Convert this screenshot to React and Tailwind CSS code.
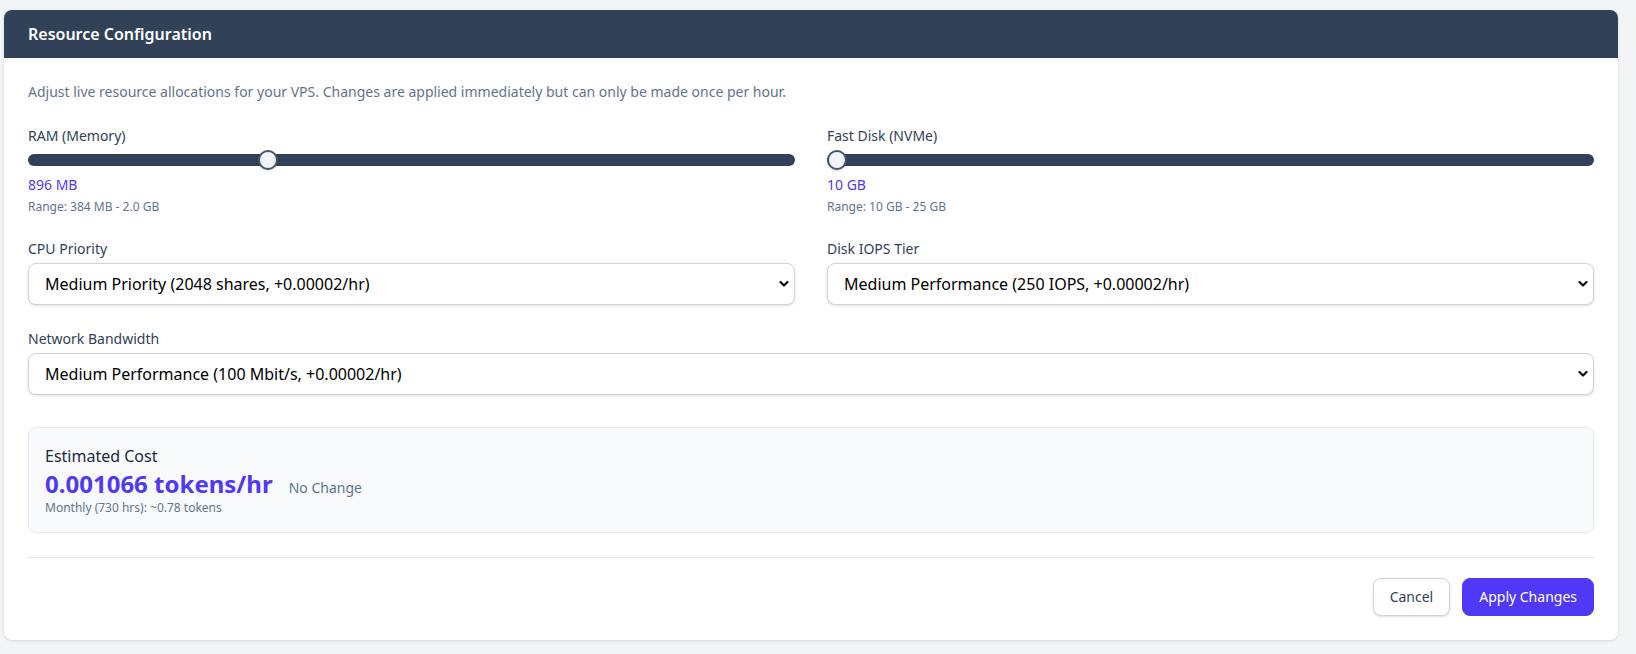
import { useState } from 'react';

const Chevron = () => (
  <svg className="pointer-events-none absolute right-[6px] top-1/2 -translate-y-1/2 w-[10px] h-[7px]" viewBox="0 0 10 7" fill="none">
    <path d="M1.5 1.5L5 5L8.5 1.5" stroke="#111" strokeWidth={2.2} strokeLinecap="round" strokeLinejoin="round" />
  </svg>
);

const Slider = ({ label, value, min, max, display, range }) => {
  const frac = (value - min) / (max - min);
  return (
    <div>
      <label className="block text-sm text-slate-700 mb-1">{label}</label>
      <div className="relative h-5 flex items-center">
        <div className="w-full h-3 rounded-full bg-slate-700" />
        <div
          className="absolute top-0 w-5 h-5 rounded-full bg-slate-100 border-2 border-slate-600 shadow-sm"
          style={{ left: `calc(${frac} * (100% - 20px))` }}
        />
      </div>
      <div className="mt-[5px] text-sm text-indigo-600">{display}</div>
      <div className="mt-1 text-xs text-slate-500">{range}</div>
    </div>
  );
};

const Select = ({ label, value, options, onChange }) => (
  <div>
    <label className="block text-sm text-slate-700 mb-1">{label}</label>
    <div className="relative">
      <select
        value={value}
        onChange={e => onChange(e.target.value)}
        className="appearance-none w-full bg-white border border-slate-300 rounded-lg shadow-sm pl-4 pr-8 py-2 text-base text-black outline-none"
      >
        {options.map(o => (
          <option key={o}>{o}</option>
        ))}
      </select>
      <Chevron />
    </div>
  </div>
);

export default function App() {
  const [cpu, setCpu] = useState('Medium Priority (2048 shares, +0.00002/hr)');
  const [iops, setIops] = useState('Medium Performance (250 IOPS, +0.00002/hr)');
  const [net, setNet] = useState('Medium Performance (100 Mbit/s, +0.00002/hr)');

  return (
    <div className="min-h-screen bg-gray-100 pl-1 pr-[18px] pt-[10px] pb-[13px] font-['Noto_Sans',sans-serif]">
      <div className="bg-white rounded-lg shadow overflow-hidden">
        <div className="bg-slate-700 px-6 py-3">
          <h2 className="text-base font-semibold text-white">Resource Configuration</h2>
        </div>

        <div className="p-6">
          <p className="text-sm text-slate-500 mb-6">
            Adjust live resource allocations for your VPS. Changes are applied immediately but can only be made once per hour.
          </p>

          <div className="grid grid-cols-2 gap-x-8 gap-y-6">
            <Slider label="RAM (Memory)" value={896} min={384} max={2048} display="896 MB" range="Range: 384 MB - 2.0 GB" />
            <Slider label="Fast Disk (NVMe)" value={10} min={10} max={25} display="10 GB" range="Range: 10 GB - 25 GB" />

            <Select
              label="CPU Priority"
              value={cpu}
              onChange={setCpu}
              options={['Low Priority (1024 shares, +0.00000/hr)', 'Medium Priority (2048 shares, +0.00002/hr)', 'High Priority (4096 shares, +0.00005/hr)']}
            />
            <Select
              label="Disk IOPS Tier"
              value={iops}
              onChange={setIops}
              options={['Low Performance (100 IOPS, +0.00000/hr)', 'Medium Performance (250 IOPS, +0.00002/hr)', 'High Performance (500 IOPS, +0.00005/hr)']}
            />
            <div className="col-span-2">
              <Select
                label="Network Bandwidth"
                value={net}
                onChange={setNet}
                options={['Low Performance (50 Mbit/s, +0.00000/hr)', 'Medium Performance (100 Mbit/s, +0.00002/hr)', 'High Performance (250 Mbit/s, +0.00005/hr)']}
              />
            </div>
          </div>

          <div className="mt-8 bg-slate-50 border border-slate-200 rounded-lg p-4">
            <div className="text-base text-slate-800">Estimated Cost</div>
            <div className="flex items-baseline gap-4">
              <span className="text-2xl font-bold text-indigo-600">0.001066 tokens/hr</span>
              <span className="text-sm text-slate-500">No Change</span>
            </div>
            <div className="text-xs text-slate-500">Monthly (730 hrs): ~0.78 tokens</div>
          </div>

          <div className="mt-6 border-t border-slate-200 pt-5 flex justify-end gap-3">
            <button className="px-4 py-2 text-sm text-slate-700 bg-white border border-slate-300 rounded-lg shadow-sm">
              Cancel
            </button>
            <button className="px-4 py-2 text-sm text-white bg-indigo-600 border border-indigo-600 rounded-lg">
              Apply Changes
            </button>
          </div>
        </div>
      </div>
    </div>
  );
}
